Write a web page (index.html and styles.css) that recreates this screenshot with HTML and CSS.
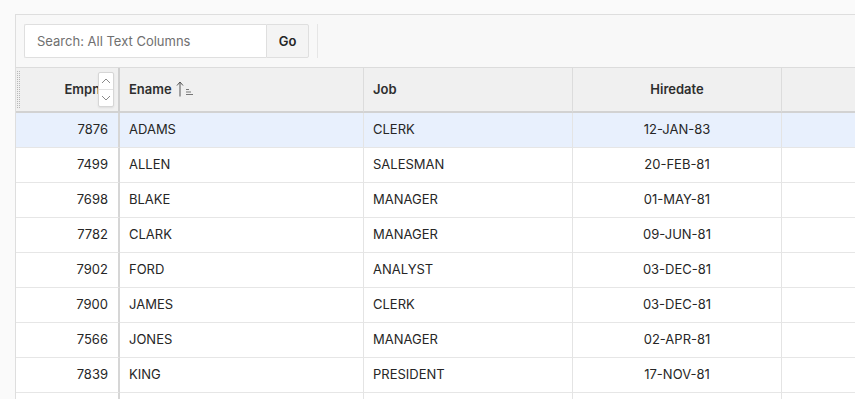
FILE: index.html
```html
<!DOCTYPE html>
<html>
<head>
<meta charset="utf-8">
<link rel="stylesheet" href="styles.css">
</head>
<body>
<div class="region">
  <div class="toolbar">
    <div class="search">
      <input class="search-input" type="text" placeholder="Search: All Text Columns">
      <button class="go">Go</button>
    </div>
    <div class="tb-sep"></div>
  </div>
  <div class="grid-wrap">
    <table class="grid">
      <colgroup>
        <col class="c-empno"><col class="c-ename"><col class="c-job"><col class="c-hire"><col class="c-last">
      </colgroup>
      <thead>
        <tr>
          <th class="num frozen hd-empno"><span class="drag"></span>Empno
            <span class="spinner"><span class="sp-up"><svg width="10" height="6" viewBox="0 0 10 6"><path d="M1 5 L5 1 L9 5" fill="none" stroke="#8a8a8a" stroke-width="1"/></svg></span><span class="sp-down"><svg width="10" height="6" viewBox="0 0 10 6"><path d="M1 1 L5 5 L9 1" fill="none" stroke="#8a8a8a" stroke-width="1"/></svg></span></span>
          </th>
          <th class="txt">Ename <svg class="sort" width="20" height="16" viewBox="0 0 20 16"><path d="M4 15.5 V1 M1 4.5 L4 1 L7 4.5" fill="none" stroke="#555" stroke-width="1"/><path d="M10 8.5 H13 M10 11 H15 M10 13.5 H17" fill="none" stroke="#777" stroke-width="1"/></svg></th>
          <th class="txt">Job</th>
          <th class="ctr">Hiredate</th>
          <th class="txt"></th>
        </tr>
      </thead>
      <tbody>
        <tr class="sel"><td class="num frozen">7876</td><td>ADAMS</td><td>CLERK</td><td class="ctr">12-JAN-83</td><td></td></tr>
        <tr><td class="num frozen">7499</td><td>ALLEN</td><td>SALESMAN</td><td class="ctr">20-FEB-81</td><td></td></tr>
        <tr><td class="num frozen">7698</td><td>BLAKE</td><td>MANAGER</td><td class="ctr">01-MAY-81</td><td></td></tr>
        <tr><td class="num frozen">7782</td><td>CLARK</td><td>MANAGER</td><td class="ctr">09-JUN-81</td><td></td></tr>
        <tr><td class="num frozen">7902</td><td>FORD</td><td>ANALYST</td><td class="ctr">03-DEC-81</td><td></td></tr>
        <tr><td class="num frozen">7900</td><td>JAMES</td><td>CLERK</td><td class="ctr">03-DEC-81</td><td></td></tr>
        <tr><td class="num frozen">7566</td><td>JONES</td><td>MANAGER</td><td class="ctr">02-APR-81</td><td></td></tr>
        <tr><td class="num frozen">7839</td><td>KING</td><td>PRESIDENT</td><td class="ctr">17-NOV-81</td><td></td></tr>
        <tr><td class="num frozen"></td><td></td><td></td><td class="ctr"></td><td></td></tr>
      </tbody>
    </table>
  </div>
</div>
</body>
</html>
```
FILE: styles.css
```css
html, body {
  margin: 0;
  padding: 0;
  height: 100%;
  overflow: hidden;
  background: #fafafa;
  font-family: Inter, "Liberation Sans", Arial, sans-serif;
  font-size: 13px;
  color: #262626;
}
.region {
  margin: 14px 0 0 15px;
  border-top: 1px solid #dedede;
  border-left: 1px solid #dedede;
  background: #fff;
}
.toolbar {
  display: flex;
  align-items: center;
  height: 52px;
  padding: 0 8px;
  background: #f8f8f8;
  border-bottom: 1px solid #dcdcdc;
}
.search {
  display: flex;
  height: 34px;
}
.search-input {
  box-sizing: border-box;
  width: 242px;
  height: 34px;
  border: 1px solid #dfdfdf;
  border-right: none;
  border-radius: 2px 0 0 2px;
  padding: 0 12px;
  font-family: inherit;
  font-size: 13px;
  color: #262626;
  background: #fff;
  outline: none;
}
.search-input::placeholder { color: #707070; }
.go {
  box-sizing: border-box;
  width: 43px;
  height: 34px;
  border: 1px solid #dfdfdf;
  border-radius: 0 2px 2px 0;
  background: #f4f4f4;
  font-family: inherit;
  font-size: 13px;
  font-weight: 600;
  color: #262626;
  padding: 0;
}
.tb-sep {
  width: 1px;
  height: 34px;
  background: #e6e6e6;
  margin-left: 8px;
}
.grid-wrap {
  overflow: hidden;
}
.grid {
  table-layout: fixed;
  border-collapse: separate;
  border-spacing: 0;
  width: 966px;
}
.c-empno { width: 104px; }
.c-ename { width: 244px; }
.c-job { width: 209px; }
.c-hire { width: 209px; }
.c-last { width: 200px; }
th, td {
  box-sizing: border-box;
  border-right: 1px solid #e4e4e4;
  border-bottom: 1px solid #e6e6e6;
  padding: 0 9px 2px;
  white-space: nowrap;
  overflow: hidden;
  text-align: left;
}
th {
  height: 45px;
  background: #f0f0f0;
  font-weight: 600;
  color: #2e2e2e;
  border-right-color: #dcdcdc;
  border-bottom: 2px solid #d2d2d2;
  position: relative;
  padding-bottom: 1px;
}
td {
  height: 35px;
}
.num { text-align: right; padding-right: 10px; }
.ctr { text-align: center; }
.frozen {
  border-right: 2px solid #d6d6d6;
}
th.frozen { border-right-color: #d0d0d0; }
tr.sel td { background: #e8f0fd; }
.sort {
  vertical-align: -3px;
  margin-left: 1px;
}
.drag {
  position: absolute;
  left: 1px;
  top: 3px;
  width: 4px;
  height: 38px;
  background:
    repeating-linear-gradient(to bottom, #b8b8b8 0 1px, transparent 1px 2px) 0 0 / 1px 100% no-repeat,
    repeating-linear-gradient(to bottom, #b8b8b8 0 1px, transparent 1px 2px) 2px 0 / 1px 100% no-repeat;
}
.spinner {
  position: absolute;
  left: 82px;
  top: 4px;
  width: 16px;
  height: 35px;
  display: flex;
  flex-direction: column;
  background: #fff;
  border: 1px solid #d6d6d6;
  border-radius: 2px;
  box-sizing: border-box;
  box-shadow: 0 1px 2px rgba(0,0,0,0.08);
}
.sp-up, .sp-down {
  flex: 1;
  display: flex;
  align-items: center;
  justify-content: center;
}
.sp-up { border-bottom: 1px solid #e2e2e2; }
```
